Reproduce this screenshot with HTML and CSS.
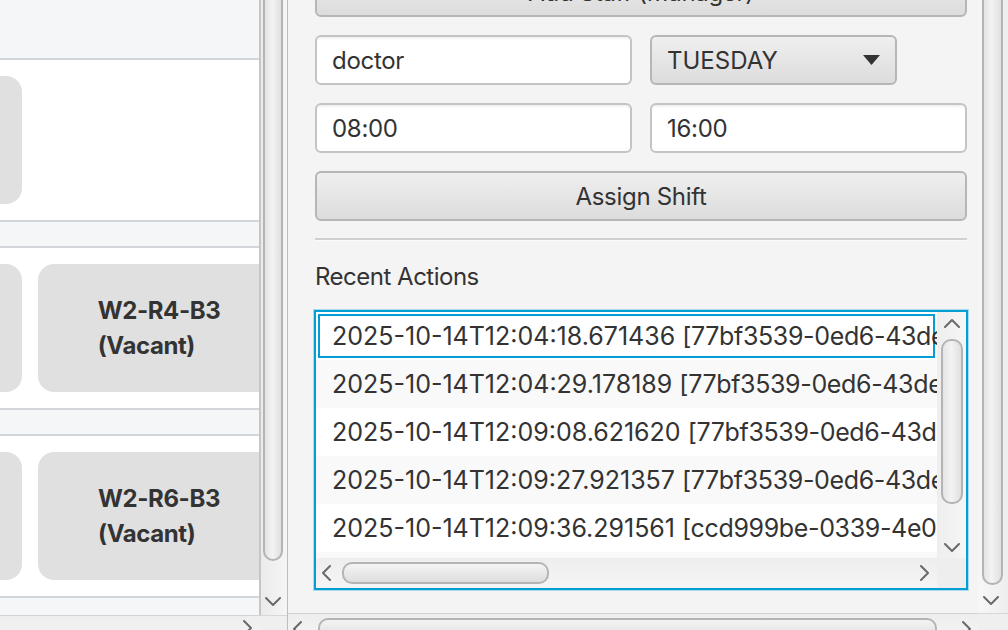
FILE: index.html
```html
<!DOCTYPE html>
<html lang="en">
<head>
<meta charset="utf-8">
<title>Ward Manager</title>
<link rel="stylesheet" href="styles.css">
</head>
<body>
<div class="app">
  <section class="left">
    <div class="left-main">
      <div class="viewport">
        <div class="rows">
          <div class="row">
            <div class="bed"></div>
          </div>
          <div class="row">
            <div class="bed"></div>
            <div class="bed"><div class="bed-label">W2-R4-B3<br>(Vacant)</div></div>
          </div>
          <div class="row">
            <div class="bed"></div>
            <div class="bed"><div class="bed-label">W2-R6-B3<br>(Vacant)</div></div>
          </div>
        </div>
      </div>
      <div class="vscroll left-vs">
        <div class="vthumb left-thumb"></div>
        <svg class="chev-v left-down" width="16" height="10" viewBox="0 0 16 10"><polyline points="1,1 8,8 15,1"/></svg>
      </div>
    </div>
    <div class="left-bottom">
      <div class="hscroll lhs">
        <svg class="chev-h" width="10" height="16" viewBox="0 0 10 16"><polyline points="1,1 8,8 1,15"/></svg>
      </div>
      <div class="corner lcorner"></div>
    </div>
  </section>
  <div class="divider"></div>
  <section class="right">
    <div class="right-main">
      <div class="form">
        <div class="btn add-btn">Add Staff (Manager)</div>
        <div class="pair">
          <input class="field" type="text" value="doctor">
          <div class="combo"><span>TUESDAY</span><svg width="17" height="10" viewBox="0 0 17 10"><polygon points="0,0 17,0 8.5,10"/></svg></div>
        </div>
        <div class="pair">
          <input class="field" type="text" value="08:00">
          <input class="field" type="text" value="16:00">
        </div>
        <div class="btn assign-btn">Assign Shift</div>
        <div class="sep"></div>
        <div class="label">Recent Actions</div>
        <div class="list">
          <div class="cells">
            <div class="cell focused">2025-10-14T12:04:18.671436 <span class="uid">[77bf3539-0ed6-43de-9b1f-2c8e4a7d0f13]</span></div>
            <div class="cell">2025-10-14T12:04:29.178189 <span class="uid">[77bf3539-0ed6-43de-9b1f-2c8e4a7d0f13]</span></div>
            <div class="cell">2025-10-14T12:09:08.621620 <span class="uid">[77bf3539-0ed6-43de-9b1f-2c8e4a7d0f13]</span></div>
            <div class="cell">2025-10-14T12:09:27.921357 <span class="uid">[77bf3539-0ed6-43de-9b1f-2c8e4a7d0f13]</span></div>
            <div class="cell">2025-10-14T12:09:36.291561 <span class="uid">[ccd999be-0339-4e0a-8c52-91d7f3b6e204]</span></div>
            <div class="cell"></div>
          </div>
          <div class="lvs">
            <svg class="chev-v" width="16" height="10" viewBox="0 0 16 10"><polyline points="1,9 8,2 15,9"/></svg>
            <div class="vthumb list-vthumb"></div>
            <svg class="chev-v list-down" width="16" height="10" viewBox="0 0 16 10"><polyline points="1,1 8,8 15,1"/></svg>
          </div>
          <div class="lhs-list">
            <svg class="chev-h" width="10" height="16" viewBox="0 0 10 16"><polyline points="9,1 2,8 9,15"/></svg>
            <div class="hthumb list-hthumb"></div>
            <svg class="chev-h list-right" width="10" height="16" viewBox="0 0 10 16"><polyline points="1,1 8,8 1,15"/></svg>
          </div>
          <div class="list-corner"></div>
        </div>
      </div>
      <div class="vscroll right-vs">
        <div class="vthumb right-thumb"></div>
        <svg class="chev-v right-down" width="16" height="10" viewBox="0 0 16 10"><polyline points="1,1 8,8 15,1"/></svg>
      </div>
    </div>
    <div class="right-bottom">
      <div class="hscroll rhs">
        <svg class="chev-h" width="10" height="16" viewBox="0 0 10 16"><polyline points="9,1 2,8 9,15"/></svg>
        <div class="hthumb right-hthumb"></div>
        <svg class="chev-h rhs-right" width="10" height="16" viewBox="0 0 10 16"><polyline points="1,1 8,8 1,15"/></svg>
      </div>
      <div class="corner rcorner"></div>
    </div>
  </section>
</div>
</body>
</html>
```
FILE: styles.css
```css
html, body {
  margin: 0;
  padding: 0;
  height: 630px;
  overflow: hidden;
}
body {
  font-family: Inter, "Noto Sans", sans-serif;
  font-size: 24px;
  color: #333333;
  background: #f4f4f4;
}
.app {
  display: flex;
  width: 1008px;
  height: 645px;
}

/* ---------- left scroll pane ---------- */
.left {
  width: 287px;
  flex: none;
  display: flex;
  flex-direction: column;
}
.left-main {
  display: flex;
  height: 615px;
  flex: none;
}
.viewport {
  width: 261px;
  box-sizing: border-box;
  border-right: 2px solid #c6c6c6;
  overflow: hidden;
  background: #f5f6f8;
}
.rows {
  width: 900px;
  margin-left: -236px;
  padding-top: 58px;
  display: flex;
  flex-direction: column;
  gap: 24px;
}
.row {
  background: #ffffff;
  border-top: 2px solid #d2d6db;
  border-bottom: 2px solid #d2d6db;
  padding: 16px;
  display: flex;
  gap: 16px;
  height: 128px;
}
.bed {
  width: 242px;
  height: 128px;
  flex: none;
  border-radius: 16px;
  background: #e0e0e0;
  display: flex;
  align-items: center;
  justify-content: center;
}
.bed-label {
  font-weight: 700;
  line-height: 35px;
  letter-spacing: -0.4px;
  text-align: left;
  color: #333333;
}

/* ---------- scrollbars ---------- */
.vscroll {
  display: flex;
  flex-direction: column;
  align-items: flex-start;
  box-sizing: border-box;
}
.left-vs {
  width: 26px;
  background: linear-gradient(to right, #ebebeb, #f5f5f5);
  padding: 0 0 8px 2px;
}
.vthumb {
  box-sizing: border-box;
  border: 2px solid #b4b4b4;
  border-radius: 10px;
  background: linear-gradient(to right, #e4e4e4, #f3f3f3 45%, #e0e0e0);
  flex: none;
}
.hthumb {
  box-sizing: border-box;
  border: 2px solid #b4b4b4;
  border-radius: 10px;
  background: linear-gradient(to bottom, #f4f4f4, #dedede);
  flex: none;
}
.left-thumb {
  width: 20px;
  height: 581px;
  margin-top: -20px;
}
.chev-v, .chev-h {
  flex: none;
  display: block;
}
.chev-v polyline, .chev-h polyline {
  fill: none;
  stroke: #6a6a6a;
  stroke-width: 2;
  stroke-linecap: round;
  stroke-linejoin: round;
}
.left-down {
  margin-top: auto;
  margin-left: 2px;
}
.left-bottom {
  display: flex;
  height: 30px;
  flex: none;
}
.hscroll {
  display: flex;
  align-items: flex-start;
  box-sizing: border-box;
  background: linear-gradient(to bottom, #eeeeee, #f4f4f4);
  border-top: 1px solid #d3d3d3;
}
.lhs {
  width: 261px;
  justify-content: flex-end;
  padding: 4px 8px 0 0;
}
.corner {
  background: #efefef;
  border-top: 1px solid #d8d8d8;
  box-sizing: border-box;
}
.lcorner {
  width: 26px;
}
.divider {
  width: 1px;
  flex: none;
  background: #bdbdbd;
}

/* ---------- right pane ---------- */
.right {
  width: 720px;
  flex: none;
  display: flex;
  flex-direction: column;
  background: #f4f4f4;
}
.right-main {
  display: flex;
  height: 613px;
  flex: none;
}
.form {
  width: 690px;
  flex: none;
  box-sizing: border-box;
  padding: 0 11px 0 27px;
  display: flex;
  flex-direction: column;
  overflow: hidden;
}
.btn {
  height: 50px;
  flex: none;
  box-sizing: border-box;
  border: 2px solid #b6b6b6;
  border-radius: 6px;
  background: linear-gradient(to bottom, #efefef, #dcdcdc);
  display: flex;
  align-items: center;
  justify-content: center;
  color: #333333;
  letter-spacing: -0.3px;
}
.add-btn {
  margin-top: -33px;
}
.assign-btn {
  margin-top: 18px;
}
.pair {
  margin-top: 18px;
  display: grid;
  grid-template-columns: 317px 317px;
  column-gap: 18px;
  height: 50px;
}
.field {
  height: 50px;
  margin: 0;
  box-sizing: border-box;
  border: 2px solid #c4c4c4;
  border-radius: 6px;
  background: #ffffff;
  box-shadow: inset 0 4px 3px -3px rgba(0, 0, 0, 0.09);
  padding: 0 15px;
  font-family: inherit;
  font-size: 24px;
  letter-spacing: -0.3px;
  color: #333333;
  outline: none;
}
.combo {
  width: 247px;
  height: 50px;
  box-sizing: border-box;
  border: 2px solid #b6b6b6;
  border-radius: 6px;
  background: linear-gradient(to bottom, #efefef, #dcdcdc);
  display: flex;
  align-items: center;
  justify-content: space-between;
  padding: 0 15px;
}
.combo polygon {
  fill: #333333;
}
.sep {
  margin-top: 17px;
  height: 2px;
  flex: none;
  background: #d0d0d0;
  border-bottom: 1px solid #fbfbfb;
}
.label {
  margin-top: 17px;
  line-height: 38px;
  height: 38px;
  flex: none;
  letter-spacing: -0.5px;
}
.list {
  margin: 14px -1px 0;
  height: 280px;
  flex: none;
  box-sizing: border-box;
  border: 2px solid #039ed3;
  box-shadow: 0 0 0 1px rgba(3, 158, 211, 0.3);
  background: #ffffff;
  display: grid;
  grid-template-columns: 621px 29px;
  grid-template-rows: 246px 30px;
}
.cells {
  overflow: hidden;
}
.cell {
  height: 48px;
  line-height: 48px;
  padding-left: 16px;
  font-size: 25px;
  white-space: nowrap;
  background: #ffffff;
}
.uid {
  letter-spacing: -0.35px;
}
.cell:nth-child(even) {
  background: #f9f9f9;
}
.cell.focused {
  box-shadow: inset 0 0 0 2px #ffffff, inset 0 0 0 4px #039ed3;
}
.lvs {
  display: flex;
  flex-direction: column;
  align-items: center;
  padding: 6px 0 5px;
  background: linear-gradient(to right, #eeeeee, #f5f5f5);
}
.list-vthumb {
  width: 22px;
  height: 165px;
  margin-top: 11px;
}
.list-down {
  margin-top: auto;
}
.lhs-list {
  display: flex;
  align-items: center;
  padding: 0 7px 0 5px;
  background: linear-gradient(to bottom, #eeeeee, #f5f5f5);
}
.list-hthumb {
  width: 207px;
  height: 22px;
  margin-left: 11px;
}
.list-right {
  margin-left: auto;
}
.list-corner {
  background: #eeeeee;
}
.right-vs {
  width: 30px;
  background: linear-gradient(to right, #f7f7f7, #eeeeee);
  padding: 0 5px 7px 4px;
}
.right-thumb {
  width: 21px;
  height: 605px;
  margin-top: -20px;
}
.right-down {
  margin-left: 1px;
  margin-top: auto;
}
.right-bottom {
  display: flex;
  height: 30px;
  flex: none;
}
.rhs {
  width: 690px;
  align-items: center;
  padding: 0 6px 0 4px;
}
.right-hthumb {
  width: 619px;
  height: 22px;
  margin-left: 16px;
}
.rhs-right {
  margin-left: auto;
}
.rcorner {
  width: 30px;
}
```
